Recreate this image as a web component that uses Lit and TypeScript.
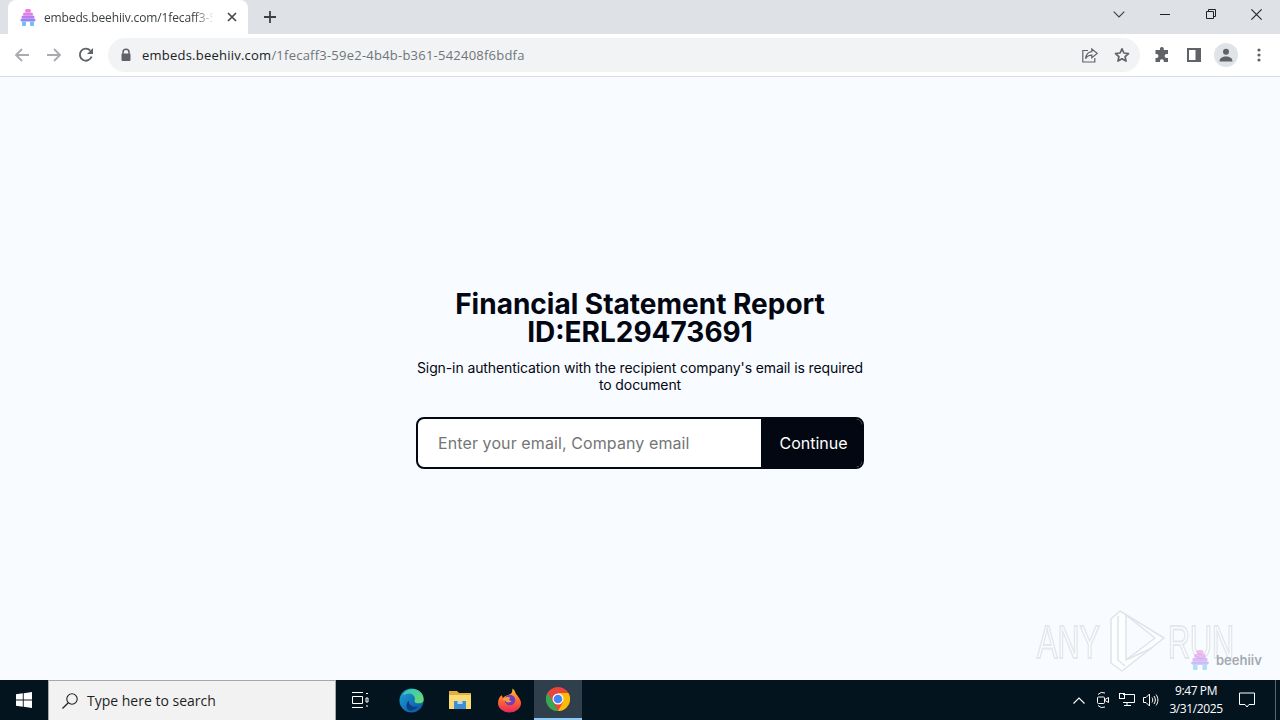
import { LitElement, html, css } from "lit";
import { customElement } from "lit/decorators.js";

const hive = (w: number, h: number) => html`<svg width=${w} height=${h} viewBox="0 0 16 17">
  <rect x="5" y="0" width="6" height="3.500" rx="1.700" fill="#f07fd8"/>
  <rect x="3" y="3.500" width="10" height="3" rx="1.500" fill="#e27fe6"/>
  <rect x="1.500" y="6.500" width="13" height="3" rx="1.500" fill="#bb7cf0"/>
  <rect x="0.500" y="9.500" width="15" height="3" rx="1.500" fill="#9a82f2"/>
  <rect x="2" y="12.500" width="4" height="4.500" rx="1" fill="#6fc0f5"/>
  <rect x="10" y="12.500" width="4" height="4.500" rx="1" fill="#6fc0f5"/>
</svg>`;

const grey = "#5f6368";

@customElement("app-root")
export class AppRoot extends LitElement {
  static styles = css`
    :host { display: block; width: 1280px; height: 720px; overflow: hidden; }
    * { box-sizing: border-box; }
    .root { position: relative; width: 1280px; height: 720px; display: flex; flex-direction: column; background: #f8fbff; font-family: "Open Sans", "Noto Sans", sans-serif; }
    svg { display: block; flex: none; }

    .tabstrip { height: 34px; background: #dee1e6; display: flex; align-items: flex-end; padding-left: 8px; flex: none; }
    .tab { position: relative; width: 240px; height: 34px; background: #fff; border-radius: 8px 8px 0 0; display: flex; align-items: center; padding: 0 8px 0 12px; gap: 8px; }
    .tab-title { width: 176px; overflow: hidden; white-space: nowrap; font-size: 12px; color: #3c4043; letter-spacing: -.13px;
      -webkit-mask-image: linear-gradient(90deg, #000 150px, transparent 170px); mask-image: linear-gradient(90deg, #000 150px, transparent 170px); }
    .tab-x { margin-left: -1px; }
    .new-tab { margin-left: 16px; margin-bottom: 11px; }
    .spacer { flex: 1; }
    .win { display: flex; align-items: center; height: 28px; align-self: flex-start; padding-right: 18px; }
    .win .chev { margin-right: 35px; }
    .win .min { margin-right: 36px; }
    .win .max { margin-right: 35px; }

    .toolbar { height: 42px; background: #fff; display: flex; align-items: center; flex: none; padding-left: 14px; }
    .nav { margin-right: 16px; }
    .omni { width: 1032px; height: 34px; margin-left: 14px; background: #f1f3f4; border-radius: 17px; display: flex; align-items: center; padding: 0 10px 0 12px; }
    .url { margin-left: 10px; font-size: 13px; letter-spacing: .23px; color: #70757a; white-space: nowrap; }
    .url b { font-weight: 400; color: #202124; }
    .omni-icons { margin-left: auto; display: flex; align-items: center; gap: 16px; }
    .tools { display: flex; align-items: center; margin-left: 14px; }
    .puzzle { margin-right: 17px; }
    .panel { margin-right: 13px; }
    .dots { margin-left: 19px; }
    .avatar { width: 24px; height: 24px; border-radius: 50%; background: #e0e3e8; display: flex; align-items: center; justify-content: center; }
    .divider { height: 1px; background: #dadce0; flex: none; }

    .page { flex: 1; display: flex; flex-direction: column; align-items: center; justify-content: center; font-family: Inter, "Liberation Sans", sans-serif; color: #030712; padding-top: 2px; }
    h1 { margin: 0; font-size: 28px; line-height: 28px; font-weight: 700; text-align: center; }
    p { margin: 13px 0 0; width: 448px; font-size: 14px; line-height: 17px; text-align: center; color: #030712; letter-spacing: -.1px; }
    .form { margin-top: 24px; width: 448px; height: 52px; display: flex; border: 2px solid #030712; border-radius: 8px; overflow: hidden; background: #fff; }
    .placeholder { flex: 1; padding-left: 20px; display: flex; align-items: center; font-size: 16px; color: #757575; letter-spacing: .1px; }
    .btn { width: 101px; background: #030712; color: #fff; font-size: 16px; display: flex; align-items: center; justify-content: center; padding-left: 4px; }

    .taskbar { height: 40px; flex: none; background: #04141f; display: flex; align-items: stretch; color: #fff; }
    .start { width: 48px; display: flex; align-items: center; justify-content: center; }
    .search { width: 288px; background: #f2f2f2; border: 1px solid #a8a8a8; border-bottom: 0; display: flex; align-items: center; padding-left: 12px; gap: 8px; color: #1f1f1f; font-size: 14px; }
    .apps { display: flex; }
    .app { width: 48px; display: flex; align-items: center; justify-content: center; margin-left: 1px; }
    .app.first { margin-left: 0; margin-right: 2px; }
    .app.active { background: #2f3f4b; border-bottom: 2px solid #8fc8f4; }
    .tray { margin-left: auto; display: flex; align-items: center; }
    .tray svg { margin-right: 8px; }
    .tray svg.up { margin-right: 11px; }
    .tray svg.meet { margin-right: 9px; }
    .clock { width: 64px; text-align: center; font-size: 12px; line-height: 18px; margin: 0 11px 0 -3px; white-space: nowrap; letter-spacing: -.4px; }
    .notif { width: 32px; display: flex; align-items: center; justify-content: flex-start; margin-right: 4px; }
    .notif svg { margin: 0; }
    .edge { width: 2px; border-left: 1px solid #5a6770; height: 40px; margin-right: 3px; }

    .overlay { position: absolute; left: 1037px; top: 608px; width: 200px; height: 66px; pointer-events: none; }
    .wm { position: absolute; top: 9px; font-family: "Liberation Sans", sans-serif; font-size: 47px; line-height: 50px; color: rgba(255,255,255,.6); -webkit-text-stroke: 2px #e4e8eb; transform: scaleX(.65); transform-origin: left; white-space: nowrap; }
    .wm.a { left: 0; }
    .wm.b { left: 131px; }
    .wm-play { position: absolute; left: 68px; top: 0; }
    .bee { position: absolute; left: 1190px; top: 650px; display: flex; align-items: center; gap: 6px; font-family: Inter, "Liberation Sans", sans-serif; font-size: 13px; font-weight: 600; color: #a4a9b2; }
    .bee svg { opacity: .5; }
  `;

  render() {
    return html`<div class="root">
      <div class="tabstrip">
        <div class="tab">
          ${hive(16, 17)}
          <span class="tab-title">embeds.beehiiv.com/1fecaff3-59e2-4b4b-b361</span>
          <svg class="tab-x" width="10" height="10" viewBox="0 0 10 10"><path d="M1 1l8 8M9 1l-8 8" stroke="#45494d" stroke-width="1.700"/></svg>
        </div>
        <svg class="new-tab" width="12" height="12" viewBox="0 0 12 12"><path d="M6 0v12M0 6h12" stroke="#3c4043" stroke-width="1.800"/></svg>
        <div class="spacer"></div>
        <div class="win">
          <svg class="chev" width="12" height="7" viewBox="0 0 12 7"><path d="M.7.7L6 6l5.300-5.300" fill="none" stroke="#3c4043" stroke-width="1.100"/></svg>
          <svg class="min" width="10" height="1" viewBox="0 0 10 1"><path d="M0 .5h10" stroke="#202124"/></svg>
          <svg class="max" width="10" height="10" viewBox="0 0 10 10"><path d="M.5 2.500h7v7h-7zM2.500 2.500v-2h7v7h-2" fill="none" stroke="#202124"/></svg>
          <svg width="11" height="11" viewBox="0 0 11 11"><path d="M.4.4l10.200 10.200M10.600.4L.4 10.600" stroke="#202124" stroke-width="1.100"/></svg>
        </div>
      </div>

      <div class="toolbar">
        <svg class="nav" width="16" height="16" viewBox="0 0 16 16"><path d="M15 8H2M8 2L2 8l6 6" fill="none" stroke="#a8abaf" stroke-width="1.800"/></svg>
        <svg class="nav" width="16" height="16" viewBox="0 0 16 16"><path d="M1 8h13M8 2l6 6-6 6" fill="none" stroke="#a8abaf" stroke-width="1.800"/></svg>
        <svg width="16" height="16" viewBox="0 0 16 16"><path d="M13.600 9.500A6 6 0 1 1 12.300 3.600" fill="none" stroke="${grey}" stroke-width="1.900"/><path d="M15 1v6H9z" fill="${grey}"/></svg>
        <div class="omni">
          <svg width="12" height="14" viewBox="0 0 12 14"><path d="M3 6V4.200a3 3 0 0 1 6 0V6" fill="none" stroke="${grey}" stroke-width="1.500"/><rect x="1.500" y="5.500" width="9" height="7.500" rx="1" fill="${grey}"/></svg>
          <span class="url"><b>embeds.beehiiv.com</b>/1fecaff3-59e2-4b4b-b361-542408f6bdfa</span>
          <div class="omni-icons">
            <svg width="16" height="15" viewBox="0 0 16 15"><path d="M6 2.500H.8v11.500h12V10" fill="none" stroke="${grey}" stroke-width="1.200"/><path d="M9.800 1l5.400 4.400-5.400 4.400V7.200C7 7.200 5 8.200 3.600 10.800C4 7 6 3.900 9.800 3.600z" fill="none" stroke="${grey}" stroke-width="1.200"/></svg>
            <svg width="16" height="16" viewBox="0 0 16 16"><path d="M8 1.800l1.900 4.200 4.600.5-3.400 3.100.9 4.500L8 11.800l-4 2.300.9-4.500L1.500 6.500l4.600-.5z" fill="none" stroke="${grey}" stroke-width="1.700" stroke-linejoin="round"/></svg>
          </div>
        </div>
        <div class="tools">
          <svg class="puzzle" width="16" height="16" viewBox="0 0 16 16"><path d="M6 1.500a2 2 0 0 1 3.800 0V3H14v4h-1.400a2 2 0 0 0 0 4H14v4H9.800v-1.300a2 2 0 0 0-3.800 0V15H1.500v-4h1a2 2 0 0 0 0-4h-1V3H6z" fill="${grey}"/></svg>
          <svg class="panel" width="14" height="14" viewBox="0 0 14 14"><path d="M0 0h14v14H0z" fill="${grey}"/><rect x="2" y="2" width="6.500" height="10" fill="#fff"/></svg>
          <div class="avatar"><svg width="14" height="14" viewBox="0 0 14 14"><circle cx="7" cy="3.800" r="3" fill="${grey}"/><path d="M.5 13.500c0-3.600 3-5 6.500-5s6.500 1.400 6.500 5z" fill="${grey}"/></svg></div>
          <svg class="dots" width="4" height="14" viewBox="0 0 4 14"><circle cx="2" cy="2" r="1.600" fill="${grey}"/><circle cx="2" cy="7" r="1.600" fill="${grey}"/><circle cx="2" cy="12" r="1.600" fill="${grey}"/></svg>
        </div>
      </div>
      <div class="divider"></div>

      <main class="page">
        <h1>Financial Statement Report<br />ID:ERL29473691</h1>
        <p>Sign-in authentication with the recipient company's email is required to document</p>
        <div class="form">
          <div class="placeholder">Enter your email, Company email</div>
          <div class="btn">Continue</div>
        </div>
      </main>

      <div class="taskbar">
        <div class="start"><svg width="16" height="16" viewBox="0 0 16 16" fill="#fff"><path d="M0 2.300L6.800 1.300V7.500H0zM7.700 1.200L16 0V7.500H7.700zM0 8.400H6.800V14.700L0 13.700zM7.700 8.400H16V16L7.700 14.800z"/></svg></div>
        <div class="search">
          <svg width="18" height="18" viewBox="0 0 18 18"><circle cx="11" cy="7" r="5.200" fill="none" stroke="#222" stroke-width="1.100"/><path d="M7.300 10.700L1.500 16.500" stroke="#222" stroke-width="1.300"/></svg>
          <span>Type here to search</span>
        </div>
        <div class="apps">
          <div class="app first"><svg width="18" height="16" viewBox="0 0 18 16" fill="none" stroke="#fff"><path d="M1 .5h11M1 15.500h11M1.500 4.500h10v7h-10zM15 1.500h2M15 6h2v4h-2zM15 14h2"/></svg></div>
          <div class="app">
            <svg width="25" height="25" viewBox="0 0 26 26">
              <defs>
                <linearGradient id="eg" x1="0" y1="0" x2="1" y2="1"><stop offset="0" stop-color="#1fa3d8"/><stop offset="1" stop-color="#0c4f9e"/></linearGradient>
                <linearGradient id="eg2" x1="0" y1="0" x2="1" y2="1"><stop offset="0" stop-color="#2fc6c0"/><stop offset="1" stop-color="#6edb6c"/></linearGradient>
              </defs>
              <circle cx="13" cy="13" r="12.500" fill="url(#eg)"/>
              <path d="M4 7C7 1 15-.5 21 3c4 2.500 5 6.500 4.500 10.500-1 2.500-5 3-8 2-2-1-1-3-1-4.500C16.500 7 11 4.500 7 6.500 5 7.500 4.500 7 4 7z" fill="url(#eg2)"/>
              <path d="M10 13c0 5 5 8 10 6-2.500 3-6 5-9.500 4.500C6 21 8 15 10 13z" fill="#0a3f86"/>
            </svg>
          </div>
          <div class="app">
            <svg width="22" height="18" viewBox="0 0 22 18">
              <path d="M0 0h8l2 2h12v15H0z" fill="#e3ae3e"/>
              <rect x="0" y="4" width="22" height="14" fill="#fbdc74"/>
              <rect x="5" y="10" width="12" height="8" fill="#3f8fd2"/>
              <rect x="8.500" y="10" width="5" height="3" fill="#b9dcf3"/>
            </svg>
          </div>
          <div class="app">
            <svg width="23" height="26" viewBox="0 0 24 26">
              <defs>
                <linearGradient id="ff" x1="0" y1="0" x2="0" y2="1"><stop offset="0" stop-color="#ffc233"/><stop offset=".5" stop-color="#ff6a2e"/><stop offset="1" stop-color="#e8265e"/></linearGradient>
              </defs>
              <path d="M15 1c4 3 2 4 5 7 3 4 4 6 4 8a12 10 0 0 1-24 0c0-4 2-7 4-8l1 3c2-3 7-3 9-5 1-2 1-3 1-5z" fill="url(#ff)"/>
              <circle cx="12.500" cy="13" r="5.500" fill="#6a3fc4"/>
              <path d="M5 13c1-3 6-4 8-2-2 1-2 2 1 3-1 2-5 2-6 0z" fill="#ff9a3c"/>
            </svg>
          </div>
          <div class="app active">
            <svg width="24" height="24" viewBox="0 0 24 24">
              <circle cx="12" cy="12" r="12" fill="#e8453c"/>
              <path d="M12 24A12 12 0 0 1 1.600 6L7 15l5 9z" fill="#34a853"/>
              <path d="M12 24a12 12 0 0 0 10.400-18H12l5 9z" fill="#fbbc05"/>
              <circle cx="12" cy="12" r="5.500" fill="#fff"/>
              <circle cx="12" cy="12" r="4.300" fill="#4285f4"/>
            </svg>
          </div>
        </div>
        <div class="tray">
          <svg class="up" width="12" height="7" viewBox="0 0 12 7"><path d="M.5 6.500L6 1l5.500 5.500" fill="none" stroke="#fff" stroke-width="1.100"/></svg>
          <svg class="meet" width="14" height="18" viewBox="0 0 14 18" fill="none" stroke="#fff"><path d="M2 3.500A6 6 0 0 1 9 2M2 14.500A6 6 0 0 0 9 16"/><rect x="1.500" y="6" width="7" height="6.500" rx="1"/><path d="M9 8.500l3.500-2v5L9 9.500"/></svg>
          <svg width="16" height="14" viewBox="0 0 16 14" fill="none" stroke="#fff"><path d="M4 1.500h11.500v8H4M8 9.500v3M5 12.500h7"/><rect x=".5" y=".5" width="5" height="5"/></svg>
          <svg width="16" height="14" viewBox="0 0 16 14" fill="none" stroke="#fff"><path d="M.5 4.500h2.500L6.500 1v12L3 9.500H.5zM9 4.500c1 1.500 1 3.500 0 5M11 3c1.800 2.500 1.800 5.500 0 8M13 1.500c2.500 3.200 2.500 7.800 0 11"/></svg>
          <div class="clock">9:47 PM<br />3/31/2025</div>
          <div class="notif"><svg width="16" height="16" viewBox="0 0 16 16" fill="none" stroke="#fff"><path d="M.5 1h15v11.500H10l-2 2.500-2-2.500H.5z"/></svg></div>
          <div class="edge"></div>
        </div>
      </div>

      <div class="overlay">
        <span class="wm a">ANY</span>
        <svg class="wm-play" width="64" height="66" viewBox="0 0 64 66" stroke="#e0e4e8" stroke-width="1.500" stroke-linejoin="round">
          <path d="M15 3L59 30 17 63 6 55V11z" fill="#fdfeff"/>
          <path d="M13 8V52L20 58" fill="none"/>
          <path d="M21 7L50 30 21 52z" fill="#f8fbff"/>
          <path d="M21 52L47 40" fill="none"/>
        </svg>
        <span class="wm b">RUN</span>
      </div>
      <div class="bee">${hive(20, 20)}<span>beehiiv</span></div>
    </div>`;
  }
}
